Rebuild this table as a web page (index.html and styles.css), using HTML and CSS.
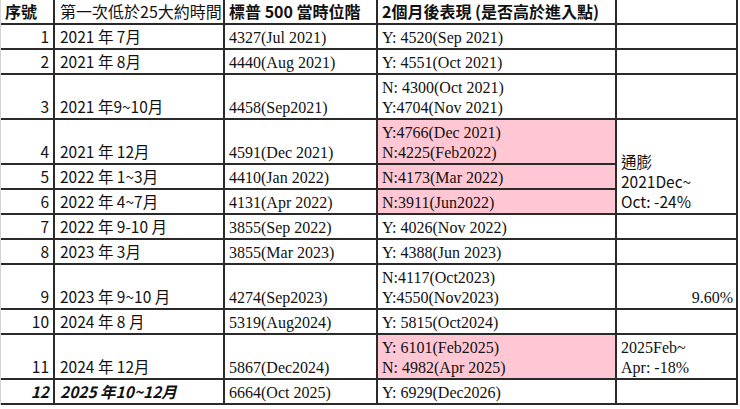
FILE: index.html
```html
<!DOCTYPE html>
<html lang="zh-Hant">
<head>
<meta charset="utf-8">
<title>標普 500</title>
<link rel="stylesheet" href="styles.css">
</head>
<body>
<table class="sheet">
  <colgroup>
    <col class="c1"><col class="c2"><col class="c3"><col class="c4"><col class="c5">
  </colgroup>
  <tbody>
    <tr class="head">
      <td class="num-h sans b">序號</td>
      <td class="sans date">第一次低於25大約時間</td>
      <td class="sans b">標普 500 當時位階</td>
      <td class="sans b">2個月後表現 (是否高於進入點)</td>
      <td></td>
    </tr>
    <tr>
      <td class="num">1</td><td class="sans date">2021 年 7月</td><td class="serif">4327(Jul 2021)</td><td class="serif">Y: 4520(Sep 2021)</td><td></td>
    </tr>
    <tr>
      <td class="num">2</td><td class="sans date">2021 年 8月</td><td class="serif">4440(Aug 2021)</td><td class="serif">Y: 4551(Oct 2021)</td><td></td>
    </tr>
    <tr>
      <td class="num">3</td><td class="sans date">2021 年9~10月</td><td class="serif">4458(Sep2021)</td><td class="serif">N: 4300(Oct 2021)<br>Y:4704(Nov 2021)</td><td></td>
    </tr>
    <tr>
      <td class="num">4</td><td class="sans date">2021 年 12月</td><td class="serif">4591(Dec 2021)</td><td class="serif pink">Y:4766(Dec 2021)<br>N:4225(Feb2022)</td>
      <td class="sans note" rowspan="3">通膨<br>2021Dec~<br>Oct: -24%</td>
    </tr>
    <tr>
      <td class="num">5</td><td class="sans date">2022 年 1~3月</td><td class="serif">4410(Jan 2022)</td><td class="serif pink">N:4173(Mar 2022)</td>
    </tr>
    <tr>
      <td class="num">6</td><td class="sans date">2022 年 4~7月</td><td class="serif">4131(Apr 2022)</td><td class="serif pink">N:3911(Jun2022)</td>
    </tr>
    <tr>
      <td class="num">7</td><td class="sans date">2022 年 9-10 月</td><td class="serif">3855(Sep 2022)</td><td class="serif">Y: 4026(Nov 2022)</td><td></td>
    </tr>
    <tr>
      <td class="num">8</td><td class="sans date">2023 年 3月</td><td class="serif">3855(Mar 2023)</td><td class="serif">Y: 4388(Jun 2023)</td><td></td>
    </tr>
    <tr>
      <td class="num">9</td><td class="sans date">2023 年 9~10 月</td><td class="serif">4274(Sep2023)</td><td class="serif">N:4117(Oct2023)<br>Y:4550(Nov2023)</td><td class="serif right">9.60%</td>
    </tr>
    <tr>
      <td class="num">10</td><td class="sans date">2024 年 8 月</td><td class="serif">5319(Aug2024)</td><td class="serif">Y: 5815(Oct2024)</td><td></td>
    </tr>
    <tr>
      <td class="num">11</td><td class="sans date">2024 年 12月</td><td class="serif">5867(Dec2024)</td><td class="serif pink">Y: 6101(Feb2025)<br>N: 4982(Apr 2025)</td><td class="serif">2025Feb~<br>Apr: -18%</td>
    </tr>
    <tr>
      <td class="num bi">12</td><td class="sans date bi">2025 年10~12月</td><td class="serif">6664(Oct 2025)</td><td class="serif">Y: 6929(Dec2026)</td><td></td>
    </tr>
  </tbody>
</table>
</body>
</html>
```
FILE: styles.css
```css
html, body {
  margin: 0;
  padding: 0;
  background: #ffffff;
}

.sheet {
  border-collapse: separate;
  border-spacing: 0;
  table-layout: fixed;
  width: 738px;
  border-left: 1px solid #d4d4d4;
  color: #111111;
}

.c1 { width: 54px; }
.c2 { width: 170px; }
.c3 { width: 153px; }
.c4 { width: 239px; }
.c5 { width: 121px; }

.sheet td {
  box-sizing: border-box;
  padding: 3px 3px 0 4px;
  border-right: 2px solid #2a2a2a;
  border-bottom: 2px solid #2a2a2a;
  vertical-align: bottom;
  line-height: 20px;
  white-space: nowrap;
  overflow: hidden;
}

.sheet td.sans,
.sheet td.num {
  padding-top: 1px;
  padding-bottom: 2px;
}

.sans {
  font-family: "Noto Sans CJK TC", "Noto Sans", sans-serif;
  font-size: 15.5px;
}

.serif {
  font-family: "Liberation Serif", "Times New Roman", serif;
  font-size: 16px;
}

.sheet td.date {
  padding-left: 5px;
}

.num,
.num-h {
  font-family: "Noto Sans CJK TC", "Noto Sans", sans-serif;
  font-size: 15.5px;
}

.sheet td.num {
  text-align: right;
  padding-right: 4px;
}

.b { font-weight: 700; }
.bi { font-weight: 700; font-style: italic; }

.head td { font-size: 16px; }

.pink { background: #ffc7d3; }

.right { text-align: right; }

.note { vertical-align: bottom; }
```
